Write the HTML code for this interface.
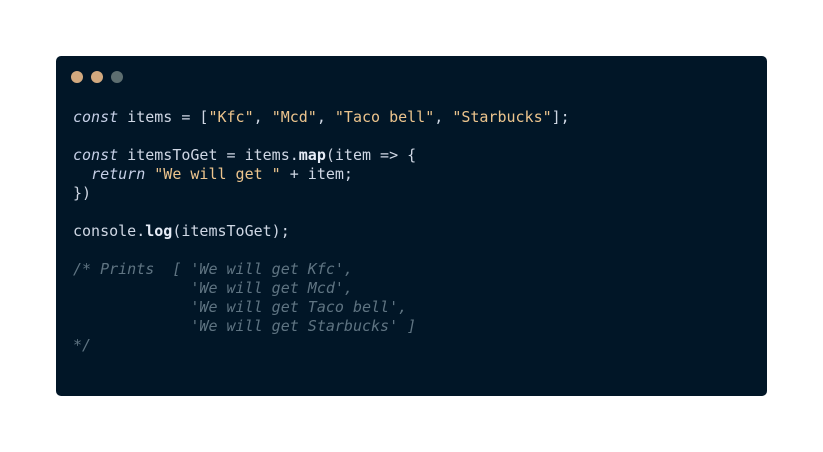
<!DOCTYPE html>
<html><head><style>
html,body{margin:0;padding:0;background:#fff;width:823px;height:452px;overflow:hidden}
.card{position:absolute;left:56px;top:56px;width:711px;height:340px;background:#011627;border-radius:5px}
.dot{position:absolute;top:15px;width:12px;height:12px;border-radius:50%}
pre{position:absolute;left:17px;top:52px;margin:0;font-family:"DejaVu Sans Mono","Liberation Mono",monospace;font-size:15px;line-height:19px;color:#cfd7e4}
.k{font-style:italic;color:#c5cfe6}
.s{color:#ecc48d}
.f{font-weight:bold;color:#e6ecf7}
.c{font-style:italic;color:#5f7482}
</style></head><body>
<div class="card">
<div class="dot" style="left:15px;background:#d2a97f"></div>
<div class="dot" style="left:35px;background:#d2a97f"></div>
<div class="dot" style="left:55px;background:#5d6e70"></div>
<pre><span class="k">const</span> items = [<span class="s">"Kfc"</span>, <span class="s">"Mcd"</span>, <span class="s">"Taco bell"</span>, <span class="s">"Starbucks"</span>];

<span class="k">const</span> itemsToGet = items.<span class="f">map</span>(item =&gt; {
  <span class="k">return</span> <span class="s">"We will get "</span> + item;
})

console.<span class="f">log</span>(itemsToGet);

<span class="c">/* Prints  [ 'We will get Kfc',
             'We will get Mcd',
             'We will get Taco bell',
             'We will get Starbucks' ]
*/</span></pre>
</div>
</body></html>
